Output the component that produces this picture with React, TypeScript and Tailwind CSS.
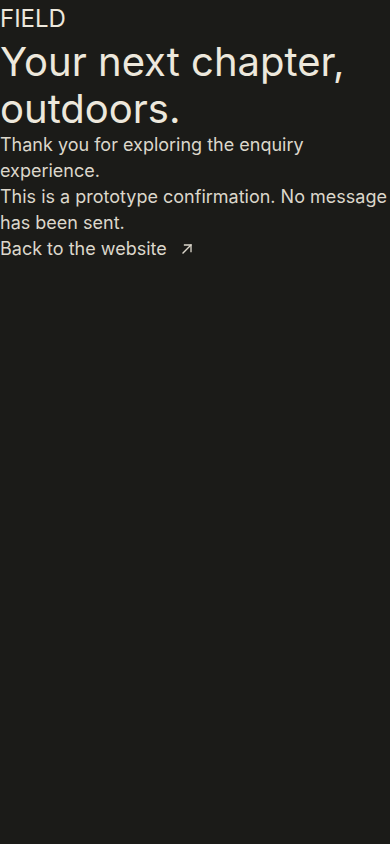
export default function App() {
  return (
    <div
      className="min-h-screen bg-[#1b1b18] text-[#ede8dc]"
      style={{ fontFamily: 'Inter, "Liberation Sans", sans-serif' }}
    >
      <div className="text-[24px] leading-[38px]">FIELD</div>
      <h1 className="text-[40px] leading-[47px] font-normal">Your next chapter, outdoors.</h1>
      <p className="text-[18px] leading-[26px] text-[#dcd7cb]">Thank you for exploring the enquiry experience.</p>
      <p className="text-[18px] leading-[26px] text-[#dcd7cb]">This is a prototype confirmation. No message has been sent.</p>
      <a className="flex items-center gap-[14px] text-[18px] leading-[26px] text-[#dcd7cb]">
        <span>Back to the website</span>
        <svg width="12" height="12" viewBox="0 0 12 12" fill="none" stroke="currentColor" strokeWidth="1.3" strokeLinecap="square">
          <path d="M2 10 L10 2" />
          <path d="M3.5 2 H10 V8.5" />
        </svg>
      </a>
    </div>
  );
}
